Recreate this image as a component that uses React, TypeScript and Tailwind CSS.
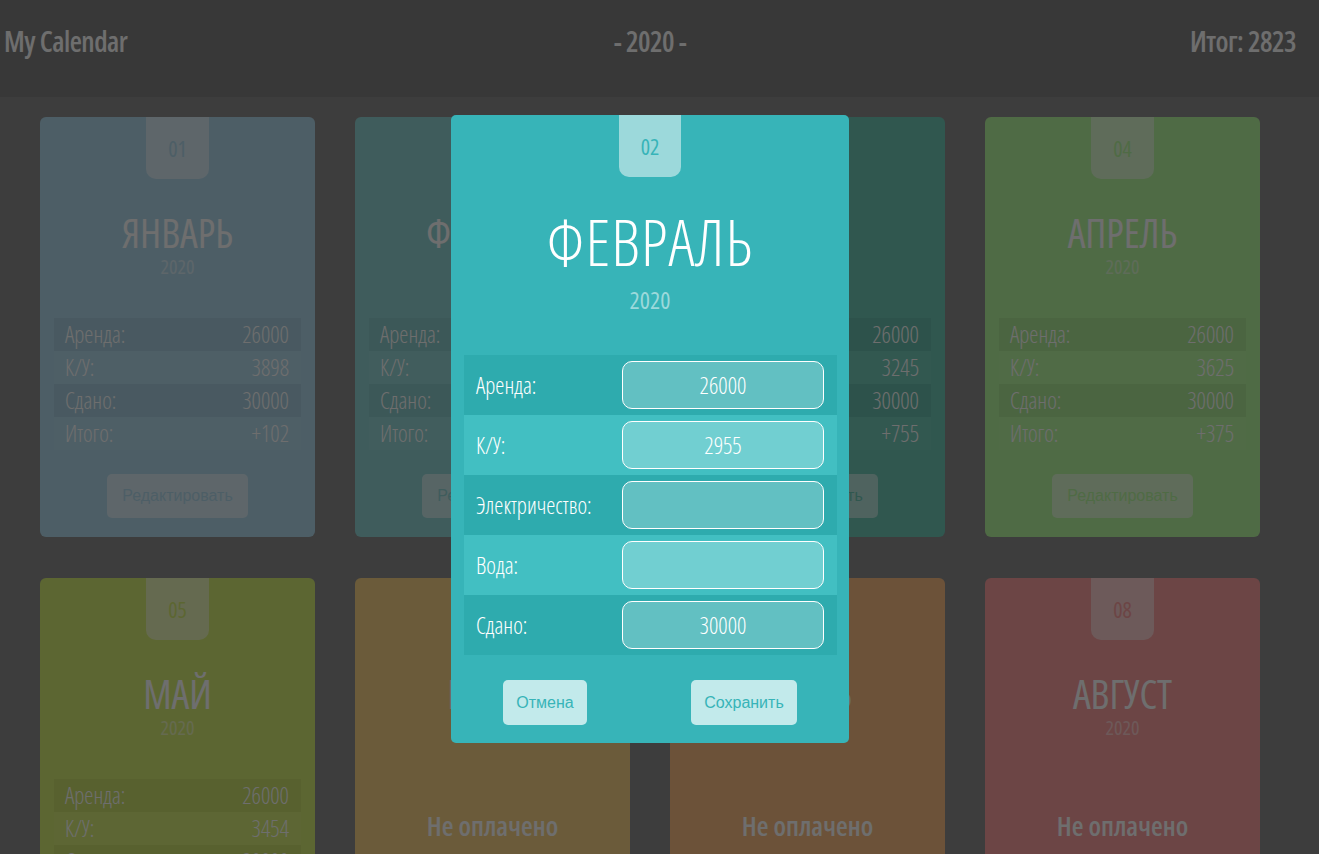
import React from "react";

type Month = {
  num: string;
  name: string;
  bg: string;
  tabText: string;
  rows?: [string, string][];
};

const months: Month[] = [
  { num: "01", name: "ЯНВАРЬ", bg: "bg-[#b3dbed]", tabText: "text-[#b3dbed]", rows: [["Аренда:", "26000"], ["К/У:", "3898"], ["Сдано:", "30000"], ["Итого:", "+102"]] },
  { num: "02", name: "ФЕВРАЛЬ", bg: "bg-[#93d6d6]", tabText: "text-[#93d6d6]", rows: [["Аренда:", "26000"], ["К/У:", "2955"], ["Сдано:", "30000"], ["Итого:", "+1045"]] },
  { num: "03", name: "МАРТ", bg: "bg-[#70cab8]", tabText: "text-[#70cab8]", rows: [["Аренда:", "26000"], ["К/У:", "3245"], ["Сдано:", "30000"], ["Итого:", "+755"]] },
  { num: "04", name: "АПРЕЛЬ", bg: "bg-[#b8f7a0]", tabText: "text-[#b8f7a0]", rows: [["Аренда:", "26000"], ["К/У:", "3625"], ["Сдано:", "30000"], ["Итого:", "+375"]] },
  { num: "05", name: "МАЙ", bg: "bg-[#d6ed74]", tabText: "text-[#d6ed74]", rows: [["Аренда:", "26000"], ["К/У:", "3454"], ["Сдано:", "30000"], ["Итого:", "+546"]] },
  { num: "06", name: "ИЮНЬ", bg: "bg-[#f9d487]", tabText: "text-[#f9d487]" },
  { num: "07", name: "ИЮЛЬ", bg: "bg-[#fbbf85]", tabText: "text-[#fbbf85]" },
  { num: "08", name: "АВГУСТ", bg: "bg-[#fba0a0]", tabText: "text-[#fba0a0]" },
];

const cond = "font-['Open_Sans',sans-serif] [font-stretch:75%]";

function Card({ m }: { m: Month }) {
  return (
    <div className={`${m.bg} rounded-[6px] h-[420px] flex flex-col items-center px-[14px] ${cond}`}>
      <div className={`w-[63px] h-[62px] shrink-0 rounded-b-[10px] bg-white/50 flex items-center justify-center text-[22px] font-normal ${m.tabText}`}>
        {m.num}
      </div>
      <div className="mt-[30px] text-[40px] leading-[48px] font-normal text-white">{m.name}</div>
      <div className="text-[20px] leading-[20px] font-normal text-white/50">2020</div>
      {m.rows ? (
        <>
          <div className="mt-[41px] w-full flex flex-col">
            {m.rows.map(([l, v], i) => (
              <div
                key={l}
                className={`h-[33px] flex items-center justify-between px-[11px] text-[23px] font-light text-white ${i % 2 === 0 ? "bg-black/[0.05]" : "bg-white/[0.03]"}`}
              >
                <span>{l}</span>
                <span className="pr-[1px]">{v}</span>
              </div>
            ))}
          </div>
          <button className={`mt-[24px] h-[44px] px-[15px] rounded-[5px] bg-white/50 font-['Liberation_Sans',Arial,sans-serif] [font-stretch:100%] text-[16px] ${m.tabText}`}>
            Редактировать
          </button>
        </>
      ) : (
        <div className="mt-[72px] text-[27px] leading-[32px] font-semibold text-white">Не оплачено</div>
      )}
    </div>
  );
}

const formRows: [string, string][] = [
  ["Аренда:", "26000"],
  ["К/У:", "2955"],
  ["Электричество:", ""],
  ["Вода:", ""],
  ["Сдано:", "30000"],
];

export default function App() {
  return (
    <div className="min-h-screen bg-[#8e8e8e] relative overflow-hidden h-[854px]">
      <div className="bg-[#828282] w-full">
        <div className={`w-[1300px] h-[97px] flex items-start justify-between px-[4px] pt-[21px] text-white font-semibold text-[28px] leading-[40px] tracking-[-0.5px] ${cond}`}>
          <span className="w-[300px]">My Calendar</span>
          <span>- 2020 -</span>
          <span className="w-[300px] text-right">Итог: 2823</span>
        </div>
      </div>
      <div className="w-[1300px] pt-[20px] pl-[40px] grid grid-cols-[repeat(4,275px)] gap-x-[40px] gap-y-[41px]">
        {months.map((m) => (
          <Card key={m.num} m={m} />
        ))}
      </div>

      <div className="fixed inset-0 bg-black/[0.57]" />

      <div className="fixed top-0 left-0 w-[1300px] flex justify-center pt-[115px]">
        <div className={`w-[398px] h-[628px] bg-[#37b4b8] rounded-[5px] flex flex-col items-center ${cond}`}>
          <div className="w-[62px] h-[62px] shrink-0 rounded-b-[10px] bg-[#9cd9db] flex items-center justify-center text-[22px] text-[#37b4b8]">
            02
          </div>
          <div className="mt-[30px] text-[64px] leading-[70px] font-light text-white tracking-[1px]">ФЕВРАЛЬ</div>
          <div className="mt-[8px] text-[24px] leading-[30px] font-medium text-[#9cd9db]">2020</div>
          <div className="mt-[40px] w-[373px] self-start ml-[13px] flex flex-col">
            {formRows.map(([l, v], i) => (
              <div key={l} className={`h-[60px] flex items-center justify-between pl-[12px] pr-[13px] ${i % 2 === 0 ? "bg-[#2eabae]" : "bg-[#42bfc2]"}`}>
                <span className="text-[23px] font-light text-white">{l}</span>
                <input
                  readOnly
                  value={v}
                  className={`w-[202px] h-[48px] rounded-[10px] border border-white bg-white/25 text-center text-white text-[23px] font-light outline-none ${cond}`}
                />
              </div>
            ))}
          </div>
          <div className="mt-[25px] w-full flex justify-around">
            <button className="h-[45px] px-[13px] rounded-[5px] bg-[#c2eaeb] text-[#37b4b8] text-[16px] font-['Liberation_Sans',Arial,sans-serif]">
              Отмена
            </button>
            <button className="h-[45px] px-[13px] rounded-[5px] bg-[#c2eaeb] text-[#37b4b8] text-[16px] font-['Liberation_Sans',Arial,sans-serif]">
              Сохранить
            </button>
          </div>
        </div>
      </div>
    </div>
  );
}
